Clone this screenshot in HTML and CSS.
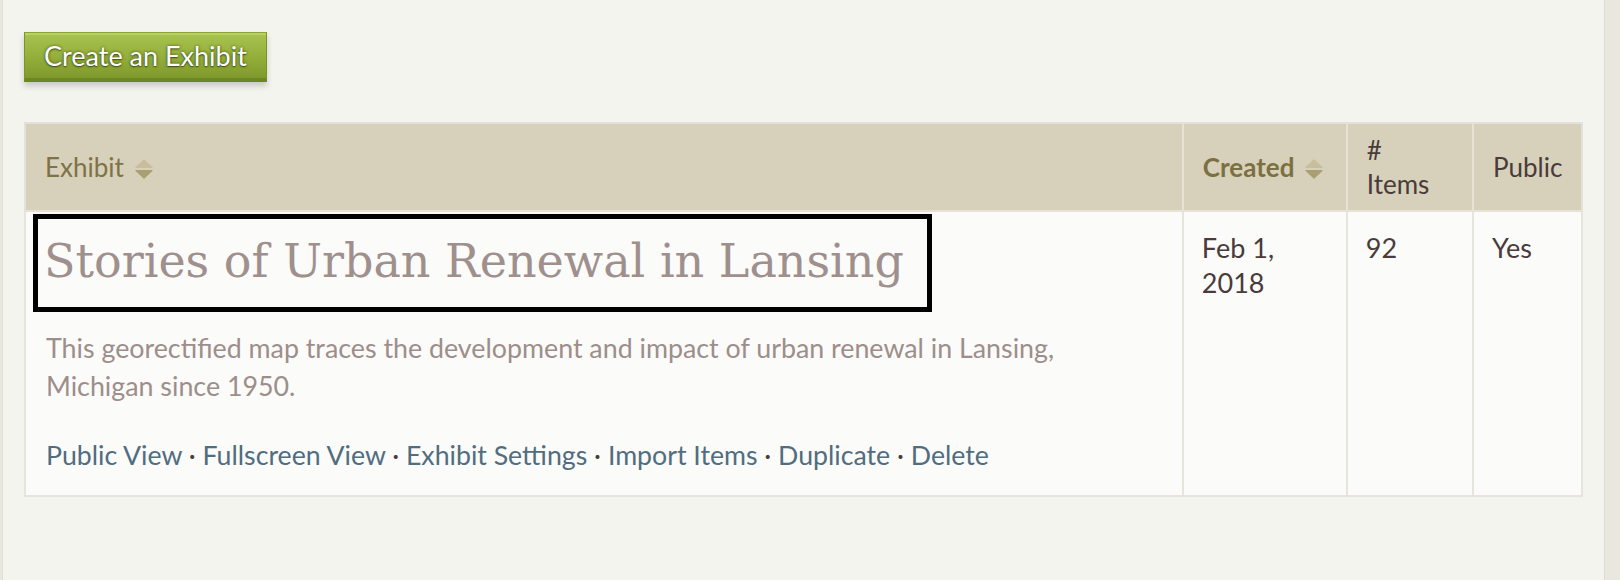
FILE: index.html
```html
<!DOCTYPE html>
<html>
<head>
<meta charset="utf-8">
<link rel="stylesheet" href="styles.css">
</head>
<body>
<div class="page">
  <div class="content">
    <a class="btn-create" href="#">Create an Exhibit</a>
    <table class="exhibits">
      <thead>
        <tr>
          <th class="col-title"><a class="sort" href="#">Exhibit</a> <svg class="sort-icon" viewBox="0 0 20 22" width="20" height="22"><path d="M10 2 L18 9.5 L2 9.5 Z" fill="#c7bf9b" stroke="#c7bf9b" stroke-linejoin="round" stroke-width="1.2"/><path d="M2 12.5 L18 12.5 L10 20 Z" fill="#a99f73" stroke="#a99f73" stroke-linejoin="round" stroke-width="1.2"/></svg></th>
          <th class="col-created"><a class="sort sorted" href="#">Created</a> <svg class="sort-icon" viewBox="0 0 20 22" width="20" height="22"><path d="M10 2 L18 9.5 L2 9.5 Z" fill="#c7bf9b" stroke="#c7bf9b" stroke-linejoin="round" stroke-width="1.2"/><path d="M2 12.5 L18 12.5 L10 20 Z" fill="#a99f73" stroke="#a99f73" stroke-linejoin="round" stroke-width="1.2"/></svg></th>
          <th class="col-items">#<br>Items</th>
          <th class="col-public">Public</th>
        </tr>
      </thead>
      <tbody>
        <tr>
          <td class="col-title">
            <h2 class="exhibit-title">Stories of Urban Renewal in Lansing</h2>
            <p class="desc">This georectified map traces the development and impact of urban renewal in Lansing, Michigan since 1950.</p>
            <p class="actions"><a href="#">Public View</a> · <a href="#">Fullscreen View</a> · <a href="#">Exhibit Settings</a> · <a href="#">Import Items</a> · <a href="#">Duplicate</a> · <a href="#">Delete</a></p>
          </td>
          <td>Feb 1,<br>2018</td>
          <td>92</td>
          <td>Yes</td>
        </tr>
      </tbody>
    </table>
  </div>
</div>
</body>
</html>
```

FILE: styles.css
```css
html, body {
  margin: 0;
  padding: 0;
}
body {
  background: #e9e7de;
  font-family: Lato, "Open Sans", sans-serif;
  color: #4a3b3b;
  width: 1620px;
  height: 580px;
  overflow: hidden;
}
.page {
  padding-left: 2px;
  height: 580px;
}
.content {
  width: 1603px;
  height: 580px;
  box-sizing: border-box;
  background: #f4f4ef;
  border-left: 1px solid #e2dfd5;
  border-right: 1px solid #dedbd0;
  padding: 32px 0 0 21px;
}
.btn-create {
  display: inline-block;
  box-sizing: border-box;
  height: 50px;
  width: 243px;
  text-align: center;
  line-height: 45px;
  font-size: 27px;
  color: #fff;
  text-decoration: none;
  background: linear-gradient(#a9c352 0%, #97b23d 45%, #7f9a2b 100%);
  border: 1px solid #7a9428;
  border-top-color: #8aa334;
  border-bottom: 4px solid #6b8722;
  box-shadow: inset 0 2px 0 #b9d064, 0 4px 6px rgba(0,0,0,0.18);
  text-shadow: 0 0 3px rgba(40,50,10,0.8), 0 1px 1px rgba(40,50,10,0.6);
}
.exhibits {
  margin-top: 40px;
  border-collapse: collapse;
  width: 1559px;
  border: 2px solid #e3e1d9;
  background: #fbfbf9;
}
.exhibits th {
  background: #d7d0ba;
  border: 2px solid #e6e2d5;
  border-top: 0;
  text-align: left;
  vertical-align: middle;
  font-weight: normal;
  font-size: 26px;
  line-height: 34px;
  padding: 9px 18px 9px 19px;
  color: #4a3b3b;
}
.exhibits th:first-child { border-left: 0; }
.exhibits th:last-child { border-right: 0; }
.sort {
  color: #7e7346;
  text-decoration: none;
}
.sort.sorted {
  font-weight: bold;
  color: #7b7042;
}
.sort-icon {
  display: inline-block;
  vertical-align: -3px;
  margin-left: 3px;
}
.col-title { width: 1120px; }
.col-created { width: 126px; }
.col-items { width: 88px; }
.col-public { width: 70px; }
.exhibits td {
  border: 2px solid #e6e4dc;
  vertical-align: top;
  font-size: 27px;
  line-height: 35px;
  padding: 18px 18px 21px 18px;
  color: #4a3b3b;
}
.exhibits td.col-title {
  padding: 2px 18px 21px 20px;
}
.exhibit-title {
  display: block;
  box-sizing: border-box;
  width: 899px;
  height: 98px;
  margin: 0 0 0 -13px;
  border: 5px solid #000;
  padding: 12px 0 0 6px;
  font-family: "DejaVu Serif", serif;
  font-weight: normal;
  font-size: 46px;
  line-height: 60px;
  color: #9f908d;
  white-space: nowrap;
}
.desc {
  margin: 17px 0 0 0;
  width: 1050px;
  font-size: 26.8px;
  line-height: 38px;
  color: #9d8e8b;
}
.actions {
  margin: 31px 0 0 0;
  font-size: 26.7px;
  line-height: 38px;
  color: #4a3b3b;
}
.actions a {
  color: #516d80;
  text-decoration: none;
}
```
